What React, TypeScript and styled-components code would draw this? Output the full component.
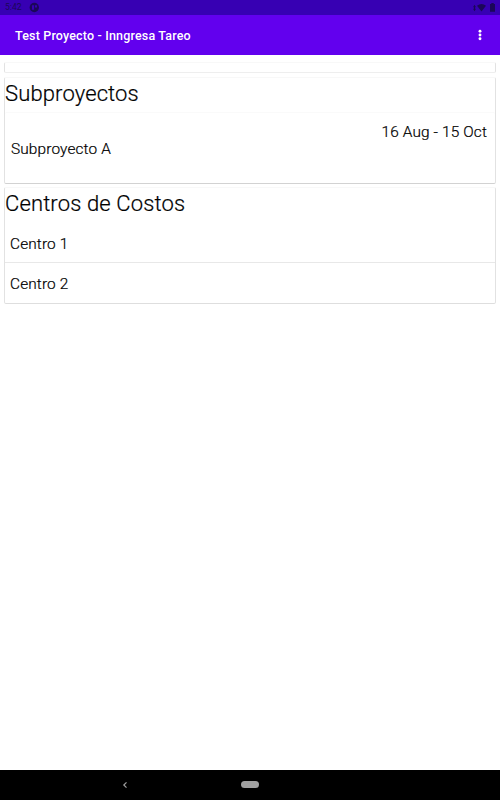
import React from "react";
import styled, { createGlobalStyle } from "styled-components";

const GlobalStyle = createGlobalStyle`
  * { box-sizing: border-box; }
  body { margin: 0; background: #fff; font-family: Roboto, "Liberation Sans", sans-serif; }
`;

const Screen = styled.div`
  width: 500px;
  height: 800px;
  display: flex;
  flex-direction: column;
  overflow: hidden;
  background: #fff;
`;

const StatusBar = styled.header`
  height: 15px;
  flex: none;
  display: flex;
  align-items: center;
  justify-content: space-between;
  padding: 0 4px 0 5px;
  background: #3700b3;
  color: #1b0758;
`;

const StatusGroup = styled.div<{ $gap: number }>`
  display: flex;
  align-items: center;
  gap: ${(p) => p.$gap}px;
  svg { display: block; }
`;

const Clock = styled.span`
  width: 18px;
  font-size: 8.6px;
  line-height: 15px;
  white-space: nowrap;
`;

const AppBar = styled.div`
  height: 40px;
  flex: none;
  display: flex;
  align-items: center;
  justify-content: space-between;
  padding: 0 17px 0 15px;
  background: #6200ee;
  color: #fff;
`;

const Title = styled.h1`
  margin: 1px 0 0;
  font-size: 12.5px;
  font-weight: 500;
  line-height: 16px;
  letter-spacing: 0.17px;
  white-space: nowrap;
`;

const MenuButton = styled.button`
  display: flex;
  padding: 0;
  border: 0;
  background: none;
`;

const Content = styled.main`
  flex: 1;
  display: flex;
  flex-direction: column;
  padding: 7px 4px 0;
  color: #000;
  -webkit-text-stroke: 0.2px #000;
`;

const Card = styled.section<{ $height: number; $gap: number; $edge: string }>`
  height: ${(p) => p.$height}px;
  margin-bottom: ${(p) => p.$gap}px;
  border: 1px solid #e2e2e2;
  border-top-color: #f8f8f8;
  border-bottom-color: ${(p) => p.$edge};
  border-radius: 2px;
`;

const Heading = styled.h2<{ $height: number }>`
  height: ${(p) => p.$height}px;
  margin: 0;
  font-size: 22px;
  font-weight: 300;
  line-height: 31px;
  letter-spacing: 0.13px;
`;

const Project = styled.article`
  height: 70px;
  padding: 10px 8px 0 6px;
  border-top: 1px solid #fafafa;
  border-radius: 2px;
`;

const Line = styled.div<{ $end?: boolean }>`
  height: 17px;
  text-align: ${(p) => (p.$end ? "right" : "left")};
  font-size: 15.4px;
  font-weight: 300;
  line-height: 18px;
  letter-spacing: 0.14px;
`;

const Center = styled.div<{ $height: number }>`
  height: ${(p) => p.$height}px;
  padding-left: 5px;
  font-size: 15.4px;
  font-weight: 300;
  line-height: 42px;
  letter-spacing: 0.14px;
  & + & { border-top: 1px solid #e8e8e8; }
`;

const NavBar = styled.nav`
  height: 30px;
  flex: none;
  display: grid;
  grid-template-columns: 1fr 1fr 1fr 1fr;
  background: #000;
`;

const NavSlot = styled.div<{ $start: number; $span: number }>`
  grid-row: 1;
  grid-column: ${(p) => p.$start} / span ${(p) => p.$span};
  display: flex;
  align-items: center;
  justify-content: center;
`;

const HomePill = styled.div`
  width: 18px;
  height: 7px;
  margin-bottom: 1px;
  border-radius: 4px;
  background: #a0a0a0;
`;

export default function App() {
  return (
    <Screen>
      <GlobalStyle />
      <StatusBar>
        <StatusGroup $gap={6}>
          <Clock>5:42</Clock>
          <svg width="11" height="11" viewBox="0 0 11 11">
            <circle cx="5.3" cy="5.5" r="4.7" fill="#1b0758" />
            <path d="M3 3.2h2.1v4.6H3zM6 3.2h2v2.3H6z" fill="#3700b3" />
          </svg>
        </StatusGroup>
        <StatusGroup $gap={1}>
          <svg width="3" height="8" viewBox="0 0 3 8" fill="#1b0758">
            <path d="M1.5 .8L3 3.2H2v1.6h1L1.5 7.2 0 4.8h1V3.2H0z" />
          </svg>
          <svg width="9" height="9" viewBox="0 0 9 9" fill="#1b0758">
            <path d="M0 2.7Q4.5-.7 9 2.7L4.5 8.5z" />
          </svg>
          <svg width="9" height="9" viewBox="0 0 9 9" fill="#1b0758">
            <path d="M3 1h1.3V0h2.4v1H8v7.8H3z" />
          </svg>
        </StatusGroup>
      </StatusBar>
      <AppBar>
        <Title>Test Proyecto - Inngresa Tareo</Title>
        <MenuButton aria-label="Menu">
          <svg width="6" height="12" viewBox="0 0 6 12" fill="#fff">
            <circle cx="3" cy="2.3" r="1.45" />
            <circle cx="3" cy="6" r="1.45" />
            <circle cx="3" cy="9.7" r="1.45" />
          </svg>
        </MenuButton>
      </AppBar>
      <Content>
        <Card $height={11} $gap={4} $edge="#eeeeee" />
        <Card $height={107} $gap={3} $edge="#d2d2d2">
          <Heading $height={34}>Subproyectos</Heading>
          <Project>
            <Line $end>16 Aug - 15 Oct</Line>
            <Line>Subproyecto A</Line>
          </Project>
        </Card>
        <Card $height={117} $gap={0} $edge="#dedede">
          <Heading $height={35}>Centros de Costos</Heading>
          <Center $height={39}>Centro 1</Center>
          <Center $height={41}>Centro 2</Center>
        </Card>
      </Content>
      <NavBar>
        <NavSlot $start={1} $span={2}>
          <svg width="6" height="8" viewBox="0 0 6 8" fill="none" stroke="#a0a0a0" strokeWidth="1.2">
            <path d="M4.5 1.3L1.8 4l2.7 2.7" />
          </svg>
        </NavSlot>
        <NavSlot $start={2} $span={2}>
          <HomePill />
        </NavSlot>
      </NavBar>
    </Screen>
  );
}
